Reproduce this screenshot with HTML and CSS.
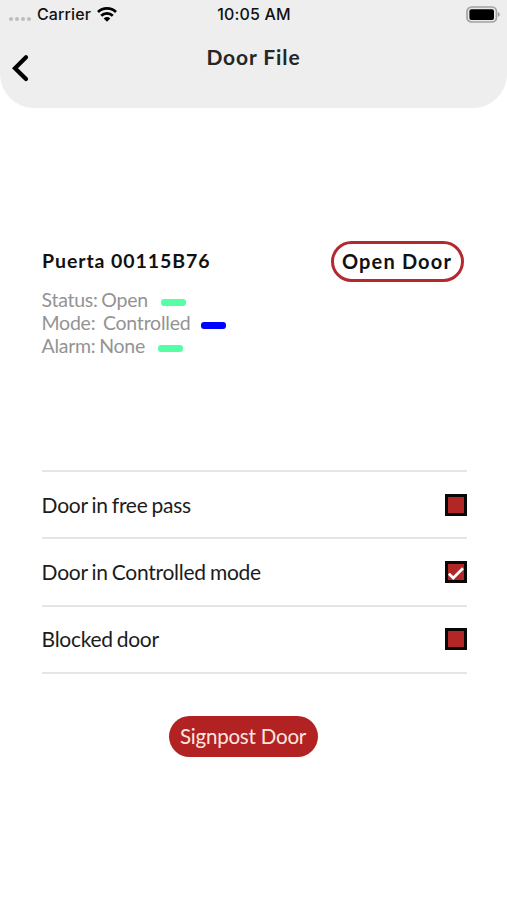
FILE: index.html
```html
<!DOCTYPE html>
<html lang="en">
<head>
<meta charset="utf-8">
<title>Door File</title>
<link rel="stylesheet" href="styles.css">
</head>
<body>
<header class="header">
  <div class="status-bar">
    <div class="carrier">
      <span class="dots"><i></i><i></i><i></i><i></i></span>
      <span class="carrier-name">Carrier</span>
      <svg class="wifi" width="20" height="15" viewBox="0 0 20 15"><g fill="none" stroke="#000" stroke-width="2.8"><path d="M1 5.1C6 .2 14 .2 19 5.1"/><path d="M4.2 8.7C7.5 5.5 12.5 5.5 15.8 8.7"/></g><path d="M6.7 11.4Q10 8.5 13.3 11.4L10 14.8Z"/></svg>
    </div>
    <time class="clock">10:05 AM</time>
    <svg class="battery" width="34" height="17" viewBox="0 0 34 17"><rect x="1" y="1" width="29.5" height="15" rx="4.5" fill="#e8e8e8" stroke="#a3a3a3" stroke-width="1.7"/><rect x="3.4" y="3.2" width="24.6" height="10.8" rx="2" /><path d="M32 6.2q1.7.5 1.7 2.3T32 10.8Z" fill="#999"/></svg>
  </div>
  <nav class="nav">
    <svg class="back" width="18" height="28" viewBox="0 0 18 28"><path d="M15 3.2L4 14.2L15 25" fill="none" stroke="#000" stroke-width="4.2" stroke-linecap="round"/></svg>
    <h1 class="title">Door File</h1>
  </nav>
</header>
<main class="content">
  <section class="door">
    <div class="door-head">
      <h2 class="door-name">Puerta 00115B76</h2>
      <button class="open-door">Open Door</button>
    </div>
    <div class="info status"><span>Status: Open</span><i class="pill green"></i></div>
    <div class="info mode"><span>Mode:&nbsp; Controlled</span><i class="pill blue"></i></div>
    <div class="info alarm"><span>Alarm: None</span><i class="pill green"></i></div>
  </section>
  <section class="modes">
    <div class="row"><span class="free">Door in free pass</span><i class="check"></i></div>
    <div class="row"><span class="controlled">Door in Controlled mode</span><i class="check"><svg width="16" height="16" viewBox="0 0 16 16"><path d="M.9 9.7L5.2 14L15 4.2" fill="none" stroke="#fff" stroke-width="2.7"/></svg></i></div>
    <div class="row"><span class="blocked">Blocked door</span><i class="check"></i></div>
  </section>
  <button class="signpost">Signpost Door</button>
</main>
</body>
</html>
```
FILE: styles.css
```css
* { box-sizing: border-box; }
body { margin: 0; width: 507px; height: 900px; overflow: hidden; background: #fff; font-family: Lato, sans-serif; color: #1c1c1c; }
h1, h2 { margin: 0; }
button { font-family: inherit; padding: 0; white-space: nowrap; }
svg { display: block; }
.header { height: 108px; background: #eee; border-radius: 0 0 34px 34px; }
.status-bar { height: 28px; display: grid; grid-template-columns: 1fr auto 1fr; align-items: center; font: 500 16px/28px Inter, sans-serif; padding: 0 7px 0 9px; color: #111; }
.carrier { display: flex; align-items: center; }
.dots { display: flex; gap: 2px; margin: 9px 6px 0 0; }
.dots i { width: 4px; height: 4px; border-radius: 50%; background: #bdbdbd; }
.carrier-name { letter-spacing: .1px; }
.wifi { margin-left: 6px; }
.clock { font-weight: 500; letter-spacing: .15px; margin-right: 1px; }
.battery { justify-self: end; }
.nav { display: grid; grid-template-columns: 48px 1fr 48px; padding-top: 14px; }
.back { margin: 12px 0 0 11px; }
.title { font-size: 21px; line-height: 29px; font-weight: 700; letter-spacing: .9px; text-align: center; color: #262626; }
.content { padding: 132px 40px 0 42px; display: flex; flex-direction: column; }
.door { height: 230px; }
.door-head { display: flex; justify-content: space-between; align-items: center; height: 42px; padding-right: 3px; margin-bottom: 6px; }
.door-name { font-size: 19.5px; letter-spacing: .93px; margin-top: -1px; color: #111; white-space: nowrap; }
.open-door { width: 133px; height: 41px; border: 3px solid #b22a30; border-radius: 21px; background: #fff; color: #111; font-size: 20px; font-weight: 700; letter-spacing: 1.15px; padding-right: 1px; }
.info { height: 23px; display: flex; align-items: center; font-size: 19.5px; line-height: 23px; color: #939393; letter-spacing: -.25px; margin-left: -.5px; }
.status, .alarm { word-spacing: -1px; }
.mode { word-spacing: -1px; letter-spacing: -.22px; }
.pill { width: 25px; height: 7px; border-radius: 3px; margin: 5px 0 0 13px; }
.mode .pill { margin-left: 10px; }
.green { background: #55ffa6; }
.blue { background: #0000ff; }
.modes { border-top: 2px solid #e5e5e5; }
.row { height: 67.4px; border-bottom: 2px solid #e5e5e5; display: flex; align-items: center; justify-content: space-between; font-size: 21px; letter-spacing: -.27px; word-spacing: -1px; }
.row span { margin: -1px 0 0 -.4px; }
.row .blocked { letter-spacing: -.3px; }
.check { width: 22px; height: 22px; border: 3px solid #080808; background: #b22626; }
.signpost { align-self: center; margin: 42px 22px 0 0; width: 149px; height: 41px; border: 0; border-radius: 21px; background: #b22222; color: #fde5e0; font-size: 20.5px; letter-spacing: -.2px; padding: 0 1px 1px 0; }
```
